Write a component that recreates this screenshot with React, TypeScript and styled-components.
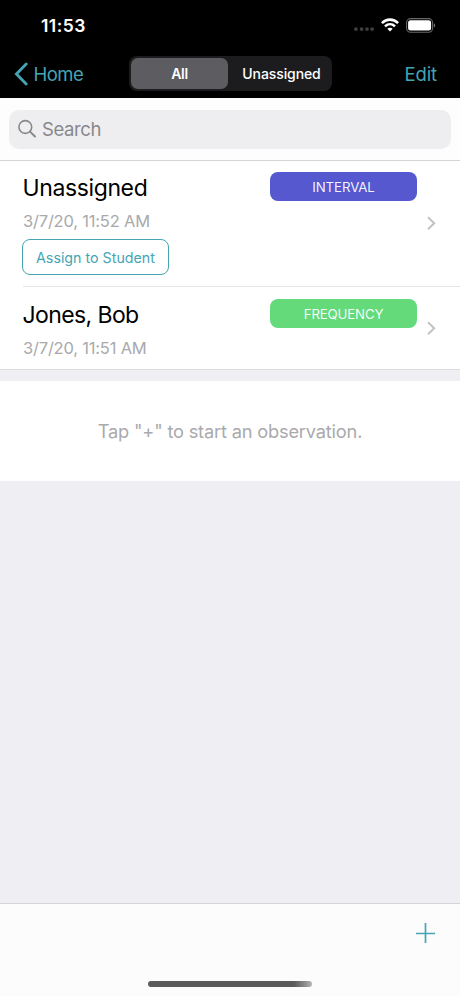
import React from "react";
import styled, { createGlobalStyle } from "styled-components";

const GlobalStyle = createGlobalStyle`
  *, *::before, *::after { box-sizing: border-box; }
  body { margin: 0; background: #efeef3; }
  button { font: inherit; background: none; border: 0; padding: 0; margin: 0; }
`;

const TEAL = "#45a5b5";

const Screen = styled.div`
  width: 460px;
  height: 996px;
  display: flex;
  flex-direction: column;
  overflow: hidden;
  background: #efeef3;
  font-family: Inter, "Liberation Sans", sans-serif;
  svg { display: block; flex: none; }
`;

const Header = styled.header`
  height: 98px;
  flex: none;
  background: #000;
  color: #fff;
`;

const StatusBar = styled.div`
  height: 49px;
  padding: 1px 24px 0 41px;
  display: flex;
  align-items: center;
  justify-content: space-between;
`;

const Clock = styled.time`
  font-size: 17.5px;
  font-weight: 600;
  letter-spacing: 0.45px;
`;

const StatusIcons = styled.div`
  display: flex;
  align-items: center;
  gap: 7px;
`;

const NavBar = styled.nav`
  height: 48px;
  display: grid;
  grid-template-columns: 115px 203px 1fr;
  align-items: center;
  padding: 0 23px 0 14px;
`;

const NavButton = styled.button<{ $end?: boolean }>`
  && {
    display: flex;
    align-items: center;
    gap: 5.5px;
    padding-top: 1px;
    justify-self: ${(p) => (p.$end ? "end" : "start")};
    color: ${TEAL};
    font-size: 18.5px;
    letter-spacing: ${(p) => (p.$end ? "-0.1px" : "-0.5px")};
  }
`;

const Segments = styled.div`
  height: 35px;
  padding: 2px;
  display: flex;
  border-radius: 8px;
  background: #1c1c1e;
`;

const Segment = styled.button<{ $selected?: boolean }>`
  && {
    flex: ${(p) => (p.$selected ? "0 0 97px" : "1")};
    padding-left: ${(p) => (p.$selected ? "0" : "5px")};
    border-radius: 7px;
    background: ${(p) => (p.$selected ? "#5d5c61" : "transparent")};
    color: #fff;
    font-size: 14px;
    font-weight: ${(p) => (p.$selected ? 600 : 500)};
    letter-spacing: ${(p) => (p.$selected ? "-0.3px" : "-0.1px")};
  }
`;

const SearchArea = styled.div`
  height: 63px;
  flex: none;
  padding: 12px 9px 0;
  background: #fdfdfd;
  border-bottom: 1px solid #d5d5d9;
`;

const SearchField = styled.div`
  height: 39px;
  padding: 0 9px 2px;
  display: flex;
  align-items: center;
  gap: 5px;
  border-radius: 10px;
  background: #eeeef0;
  color: #88888c;
  font-size: 18.5px;
  letter-spacing: -0.4px;
`;

const List = styled.main`
  flex: none;
  background: #fff;
  border-bottom: 1px solid #dddde0;
`;

const Row = styled.article<{ $height: number; $top: number; $divided?: boolean }>`
  height: ${(p) => p.$height}px;
  margin-left: 23px;
  padding: ${(p) => p.$top}px 24px 0 0;
  display: grid;
  grid-template-columns: 1fr 147px 19px;
  border-bottom: ${(p) => (p.$divided ? "1px solid #e6e6e8" : "0")};
`;

const Details = styled.div`
  display: flex;
  flex-direction: column;
  align-items: flex-start;
`;

const Name = styled.h2<{ $spacing: number }>`
  margin: 1px 0 0 -0.5px;
  font-size: 23px;
  font-weight: 400;
  line-height: 30px;
  letter-spacing: ${(p) => p.$spacing}px;
  color: #000;
`;

const Timestamp = styled.time`
  margin-top: 5px;
  font-size: 16.5px;
  line-height: 26px;
  letter-spacing: -0.2px;
  color: #a9a9ab;
`;

const AssignButton = styled.button`
  && {
    width: 147px;
    height: 36px;
    margin: 5px 0 0 -1px;
    border: 1px solid ${TEAL};
    border-radius: 8px;
    color: ${TEAL};
    font-size: 14.25px;
    letter-spacing: 0;
  }
`;

const Badge = styled.span<{ $color: string; $spacing: number }>`
  height: 29px;
  display: flex;
  align-items: center;
  justify-content: center;
  border-radius: 8px;
  background: ${(p) => p.$color};
  color: rgba(255, 255, 255, 0.94);
  font-size: 13.25px;
  letter-spacing: ${(p) => p.$spacing}px;
`;

const Disclosure = styled.div`
  display: flex;
  justify-content: flex-end;
  align-items: center;
  padding-bottom: 12px;
`;

const Hint = styled.p`
  height: 100px;
  flex: none;
  margin: 11px 0 0;
  display: flex;
  align-items: center;
  justify-content: center;
  background: #fff;
  color: #aaaaac;
  font-size: 18.25px;
  letter-spacing: -0.2px;
`;

const Toolbar = styled.footer`
  height: 93px;
  flex: none;
  margin-top: auto;
  padding: 19px 24px 9px;
  display: flex;
  flex-direction: column;
  justify-content: space-between;
  border-top: 1px solid #d5d5d9;
  background: #fcfcfd;
`;

const AddButton = styled.button`
  align-self: flex-end;
`;

const HomeIndicator = styled.div`
  width: 164px;
  height: 6px;
  align-self: center;
  border-radius: 3px;
  background: linear-gradient(90deg, #5b5b5c 0 89%, #8f8f90 96%, #b5b5b6);
`;

const Chevron = () => (
  <Disclosure>
    <svg width="9" height="14" viewBox="0 0 9 14" fill="none" stroke="#c2c2c5" strokeWidth="2">
      <path d="M1 1.2L7.2 7.2L1 13.2" />
    </svg>
  </Disclosure>
);

export default function App() {
  return (
    <Screen>
      <GlobalStyle />
      <Header>
        <StatusBar>
          <Clock>11:53</Clock>
          <StatusIcons>
            <svg width="21" height="12" viewBox="0 0 21 12" fill="#3e3e3e">
              <circle cx="2.9" cy="10.1" r="1.9" />
              <circle cx="8.6" cy="10.1" r="1.9" />
              <circle cx="14" cy="10.1" r="1.9" />
              <circle cx="19.1" cy="10.1" r="1.9" />
            </svg>
            <svg width="18" height="14" viewBox="0 0 18 14" fill="none" stroke="#fff" strokeWidth="2.6">
              <path d="M.9 5.1C5.5.5 12.5.5 17.1 5.1" />
              <path d="M4 8.4c2.9-2.8 7.1-2.8 10 0" />
              <path d="M6.3 10.8c1.5-1.5 3.9-1.5 5.4 0L9 13.6z" fill="#fff" stroke="none" />
            </svg>
            <svg width="30" height="15" viewBox="0 0 30 15">
              <rect x=".6" y=".6" width="26" height="13.6" rx="4" fill="none" stroke="#68686a" strokeWidth="1.1" />
              <rect x="2.1" y="2.2" width="23" height="10.4" rx="2.5" fill="#fff" />
              <path d="M27.9 5.2c1.7.8 1.7 3.6 0 4.4z" fill="#777" />
            </svg>
          </StatusIcons>
        </StatusBar>
        <NavBar>
          <NavButton>
            <svg width="14" height="24" viewBox="0 0 14 24" fill="none" stroke={TEAL} strokeWidth="2.8" strokeLinecap="round">
              <path d="M12.2 2L2.4 12L12.2 22" />
            </svg>
            Home
          </NavButton>
          <Segments>
            <Segment $selected>All</Segment>
            <Segment>Unassigned</Segment>
          </Segments>
          <NavButton $end>Edit</NavButton>
        </NavBar>
      </Header>
      <SearchArea>
        <SearchField>
          <svg width="19" height="19" viewBox="0 0 19 19" fill="none" stroke="#88888c" strokeWidth="1.6" strokeLinecap="round">
            <circle cx="7.3" cy="8" r="6.4" />
            <path d="M12 12.6L17 17.5" strokeWidth="2" />
          </svg>
          Search
        </SearchField>
      </SearchArea>
      <List>
        <Row $height={126} $top={11} $divided>
          <Details>
            <Name $spacing={-0.38}>Unassigned</Name>
            <Timestamp>3/7/20, 11:52 AM</Timestamp>
            <AssignButton>Assign to Student</AssignButton>
          </Details>
          <Badge $color="#5558cf" $spacing={-0.1}>INTERVAL</Badge>
          <Chevron />
        </Row>
        <Row $height={82} $top={12}>
          <Details>
            <Name $spacing={-0.6}>Jones, Bob</Name>
            <Timestamp>3/7/20, 11:51 AM</Timestamp>
          </Details>
          <Badge $color="#64da7b" $spacing={-0.15}>FREQUENCY</Badge>
          <Chevron />
        </Row>
      </List>
      <Hint>Tap "+" to start an observation.</Hint>
      <Toolbar>
        <AddButton aria-label="Add">
          <svg width="20" height="20" viewBox="0 0 20 20" fill="none" stroke={TEAL} strokeWidth="1.7">
            <path d="M9.5 0V20M0 10.5H19" />
          </svg>
        </AddButton>
        <HomeIndicator />
      </Toolbar>
    </Screen>
  );
}
